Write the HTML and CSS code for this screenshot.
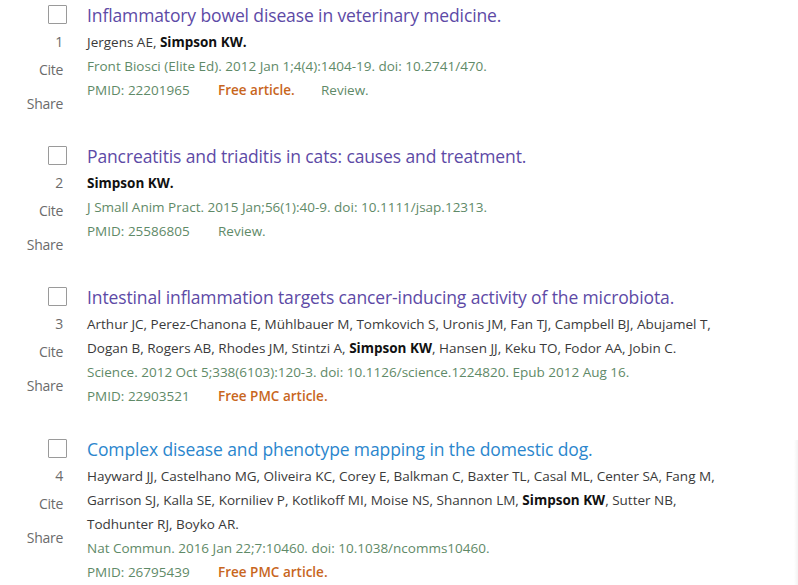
FILE: index.html
```html
<!DOCTYPE html>
<html lang="en">
<head>
<meta charset="utf-8">
<title>Search results</title>
<link rel="stylesheet" href="styles.css">
</head>
<body>
<div class="results">
  <article class="item">
    <div class="side">
      <span class="box"></span>
      <span class="num">1</span>
      <span class="act cite">Cite</span>
      <span class="act share">Share</span>
    </div>
    <div class="main">
      <a class="title visited">Inflammatory bowel disease in veterinary medicine.</a>
      <div class="authors">Jergens AE, <b>Simpson KW.</b></div>
      <div class="journal">Front Biosci (Elite Ed). 2012 Jan 1;4(4):1404-19. doi: 10.2741/470.</div>
      <div class="meta"><span class="pmid">PMID: 22201965</span><span class="free">Free article.</span><span class="type">Review.</span></div>
    </div>
  </article>

  <article class="item">
    <div class="side">
      <span class="box"></span>
      <span class="num">2</span>
      <span class="act cite">Cite</span>
      <span class="act share">Share</span>
    </div>
    <div class="main">
      <a class="title visited">Pancreatitis and triaditis in cats: causes and treatment.</a>
      <div class="authors"><b>Simpson KW.</b></div>
      <div class="journal">J Small Anim Pract. 2015 Jan;56(1):40-9. doi: 10.1111/jsap.12313.</div>
      <div class="meta"><span class="pmid">PMID: 25586805</span><span class="type">Review.</span></div>
    </div>
  </article>

  <article class="item">
    <div class="side">
      <span class="box"></span>
      <span class="num">3</span>
      <span class="act cite">Cite</span>
      <span class="act share">Share</span>
    </div>
    <div class="main">
      <a class="title visited">Intestinal inflammation targets cancer-inducing activity of the microbiota.</a>
      <div class="authors"><span class="ln">Arthur JC, Perez-Chanona E, Mühlbauer M, Tomkovich S, Uronis JM, Fan TJ, Campbell BJ, Abujamel T,</span><span class="ln">Dogan B, Rogers AB, Rhodes JM, Stintzi A, <b>Simpson KW</b>, Hansen JJ, Keku TO, Fodor AA, Jobin C.</span></div>
      <div class="journal">Science. 2012 Oct 5;338(6103):120-3. doi: 10.1126/science.1224820. Epub 2012 Aug 16.</div>
      <div class="meta"><span class="pmid">PMID: 22903521</span><span class="free">Free PMC article.</span></div>
    </div>
  </article>

  <article class="item">
    <div class="side">
      <span class="box"></span>
      <span class="num">4</span>
      <span class="act cite">Cite</span>
      <span class="act share">Share</span>
    </div>
    <div class="main">
      <a class="title">Complex disease and phenotype mapping in the domestic dog.</a>
      <div class="authors"><span class="ln">Hayward JJ, Castelhano MG, Oliveira KC, Corey E, Balkman C, Baxter TL, Casal ML, Center SA, Fang M,</span><span class="ln">Garrison SJ, Kalla SE, Korniliev P, Kotlikoff MI, Moise NS, Shannon LM, <b>Simpson KW</b>, Sutter NB,</span><span class="ln">Todhunter RJ, Boyko AR.</span></div>
      <div class="journal">Nat Commun. 2016 Jan 22;7:10460. doi: 10.1038/ncomms10460.</div>
      <div class="meta"><span class="pmid">PMID: 26795439</span><span class="free">Free PMC article.</span></div>
    </div>
  </article>
</div>
<div class="edge-shadow"></div>
</body>
</html>
```

FILE: styles.css
```css
html, body {
  margin: 0;
  padding: 0;
  background: #ffffff;
}

body {
  font-family: "Open Sans", "Noto Sans", "Liberation Sans", sans-serif;
  color: #333333;
  overflow: hidden;
  position: relative;
  height: 585px;
}

.results {
  padding-top: 0;
  display: flex;
  flex-direction: column;
  gap: 25px;
}

.item {
  display: flex;
  gap: 20px;
  align-items: flex-start;
}

.side {
  width: 67px;
  flex: none;
  display: flex;
  flex-direction: column;
  align-items: flex-end;
  font-size: 14px;
  letter-spacing: -0.3px;
  color: #6b6b6b;
}

.box {
  width: 17px;
  height: 17px;
  border: 1.5px solid #9a9a9a;
  border-radius: 1px;
  margin-top: 5px;
  box-sizing: content-box;
}

.num,
.act {
  line-height: 24px;
  padding-right: 4px;
}

.num {
  margin-top: 6px;
}

.cite {
  margin-top: 4px;
}

.share {
  margin-top: 10px;
}

.main {
  flex: 1;
  min-width: 0;
  padding-bottom: 1px;
}

.title {
  display: block;
  font-size: 17.5px;
  line-height: 30px;
  letter-spacing: -0.12px;
  color: #2b86cd;
  white-space: nowrap;
}

.title.visited {
  color: #5d4aa6;
}

.authors,
.journal,
.meta {
  font-size: 13.5px;
  line-height: 24px;
  letter-spacing: 0;
  white-space: nowrap;
}

.authors {
  color: #3a3a3a;
}

.authors b {
  color: #111111;
  font-weight: 700;
}

.ln {
  display: block;
}

.journal,
.pmid,
.type {
  color: #5f8a68;
}

.meta {
  display: flex;
}

.pmid {
  width: 131px;
}

.free {
  color: #c8661d;
  font-weight: 600;
  width: 103px;
}

.edge-shadow {
  position: absolute;
  right: 0;
  top: 440px;
  bottom: 0;
  width: 4px;
  background: linear-gradient(to right, rgba(0,0,0,0), rgba(0,0,0,0.05));
}
```
